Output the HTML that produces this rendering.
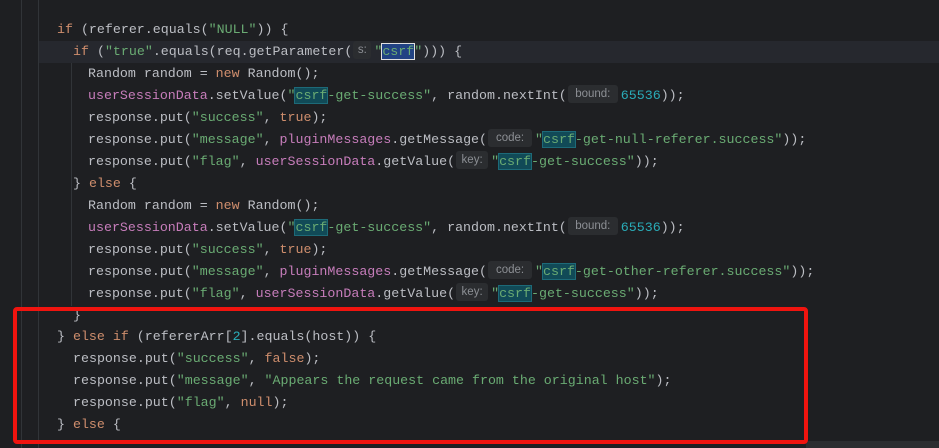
<!DOCTYPE html>
<html><head><meta charset="utf-8"><style>
body{margin:0;width:939px;height:448px;background:#1e1f22;overflow:hidden;position:relative;font-family:"Liberation Mono",monospace;font-size:13.3px;color:#bcbec4}
.l{position:absolute;left:0;right:0;height:22px;line-height:22px;white-space:pre}
.hl{background:#26282e;left:39px}
.k{color:#cf8e6d}.s{color:#6aab73}.f{color:#c77dbb}.n{color:#2aacb8}
.h{display:inline-block;background:#2b2d30;color:#8c8f94;font-family:"Liberation Sans",sans-serif;font-size:11.5px;height:18px;line-height:18px;border-radius:3px;text-align:center;vertical-align:middle;margin:0 3px 0 1px;position:relative;top:-1px}
.c{background:#114a57;outline:1px solid #1d6a78}
.sel{background:#214283;outline:1px solid #e0e0e0}
.g{position:absolute;width:1px;background:#313438}
</style></head><body>
<div class="g" style="left:21px;top:0;height:448px"></div>
<div class="g" style="left:38px;top:0;height:448px"></div>
<div class="g" style="left:71px;top:61px;height:245px"></div>
<div class="l hl" style="top:41px"></div>
<div class="l" style="top:19px;padding-left:57px"><span class="k">if</span> (referer.equals(<span class="s">"NULL"</span>)) {</div>
<div class="l" style="top:41px;padding-left:73px"><span class="k">if</span> (<span class="s">"true"</span>.equals(req.getParameter(<span class="h" style="width:18px">s:</span><span class="s">"<span class="sel">csrf</span>"</span>))) {</div>
<div class="l" style="top:63px;padding-left:88px">Random random = <span class="k">new</span> Random();</div>
<div class="l" style="top:85px;padding-left:88px"><span class="f">userSessionData</span>.setValue(<span class="s">"<span class="c">csrf</span>-get-success"</span>, random.nextInt(<span class="h" style="width:50px">bound:</span><span class="n">65536</span>));</div>
<div class="l" style="top:107px;padding-left:88px">response.put(<span class="s">"success"</span>, <span class="k">true</span>);</div>
<div class="l" style="top:129px;padding-left:88px">response.put(<span class="s">"message"</span>, <span class="f">pluginMessages</span>.getMessage(<span class="h" style="width:44px">code:</span><span class="s">"<span class="c">csrf</span>-get-null-referer.success"</span>));</div>
<div class="l" style="top:151px;padding-left:88px">response.put(<span class="s">"flag"</span>, <span class="f">userSessionData</span>.getValue(<span class="h" style="width:32px">key:</span><span class="s">"<span class="c">csrf</span>-get-success"</span>));</div>
<div class="l" style="top:173px;padding-left:73px">} <span class="k">else</span> {</div>
<div class="l" style="top:195px;padding-left:88px">Random random = <span class="k">new</span> Random();</div>
<div class="l" style="top:217px;padding-left:88px"><span class="f">userSessionData</span>.setValue(<span class="s">"<span class="c">csrf</span>-get-success"</span>, random.nextInt(<span class="h" style="width:50px">bound:</span><span class="n">65536</span>));</div>
<div class="l" style="top:239px;padding-left:88px">response.put(<span class="s">"success"</span>, <span class="k">true</span>);</div>
<div class="l" style="top:261px;padding-left:88px">response.put(<span class="s">"message"</span>, <span class="f">pluginMessages</span>.getMessage(<span class="h" style="width:44px">code:</span><span class="s">"<span class="c">csrf</span>-get-other-referer.success"</span>));</div>
<div class="l" style="top:283px;padding-left:88px">response.put(<span class="s">"flag"</span>, <span class="f">userSessionData</span>.getValue(<span class="h" style="width:32px">key:</span><span class="s">"<span class="c">csrf</span>-get-success"</span>));</div>
<div class="l" style="top:305px;padding-left:73px">}</div>
<div class="l" style="top:326px;padding-left:57px">} <span class="k">else if</span> (refererArr[<span class="n">2</span>].equals(host)) {</div>
<div class="l" style="top:348px;padding-left:73px">response.put(<span class="s">"success"</span>, <span class="k">false</span>);</div>
<div class="l" style="top:370px;padding-left:73px">response.put(<span class="s">"message"</span>, <span class="s">"Appears the request came from the original host"</span>);</div>
<div class="l" style="top:392px;padding-left:73px">response.put(<span class="s">"flag"</span>, <span class="k">null</span>);</div>
<div class="l" style="top:414px;padding-left:57px">} <span class="k">else</span> {</div>
<div style="position:absolute;left:806px;top:441px;right:0;bottom:0;background:#2b2d30"></div>
<div style="position:absolute;left:13px;top:307px;width:787px;height:129px;border:4px solid #f0140f;border-radius:4px"></div>
</body></html>
